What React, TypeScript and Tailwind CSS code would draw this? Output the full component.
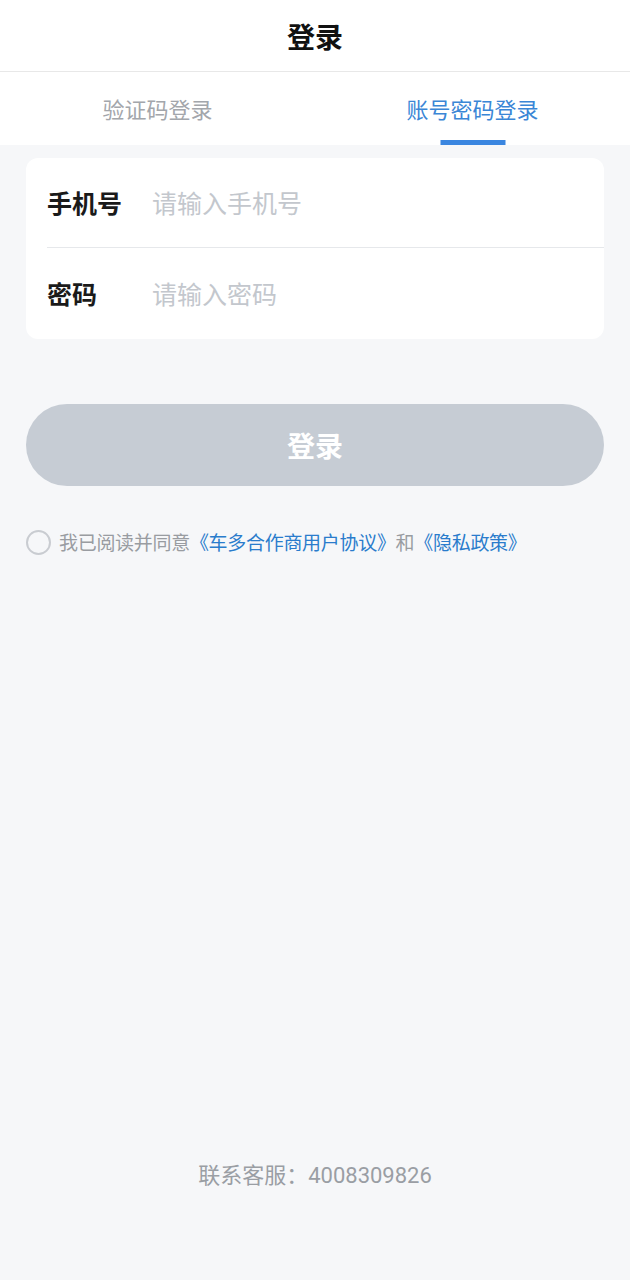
export default function App() {
  return (
    <div
      className="flex min-h-[1280px] w-[630px] flex-col bg-[#f6f7f9]"
      style={{ fontFamily: '"Noto Sans CJK SC", "Noto Sans", sans-serif' }}
    >
      {/* Title bar */}
      <div className="flex h-[72px] items-center justify-center border-b border-[#e8e8e8] bg-white">
        <span className="text-[28px] font-bold text-[#111]">登录</span>
      </div>

      {/* Tabs */}
      <div className="flex h-[73px] bg-white">
        <div className="flex flex-1 items-center justify-center">
          <span className="text-[22px] text-[#a3a6ab]">验证码登录</span>
        </div>
        <div className="relative flex flex-1 items-center justify-center">
          <span className="text-[22px] text-[#3a86d6]">账号密码登录</span>
          <div className="absolute bottom-0 left-1/2 h-[5px] w-[65px] -translate-x-1/2 bg-[#3a86e0]" />
        </div>
      </div>

      <div className="flex flex-1 flex-col px-[26px] pt-[13px]">
        {/* Form card */}
        <div className="rounded-[12px] bg-white pl-[21px]">
          <div className="flex h-[90px] items-center border-b border-[#e6e8eb]">
            <span className="w-[105px] text-[25px] font-bold text-[#1a1a1a]">手机号</span>
            <span className="text-[25px] text-[#c3c7cd]">请输入手机号</span>
          </div>
          <div className="flex h-[91px] items-center">
            <span className="w-[105px] text-[25px] font-bold text-[#1a1a1a]">密码</span>
            <span className="text-[25px] text-[#c3c7cd]">请输入密码</span>
          </div>
        </div>

        {/* Login button */}
        <div className="mt-[65px] flex h-[82px] items-center justify-center rounded-full bg-[#c6ccd4]">
          <span className="text-[28px] font-bold text-white">登录</span>
        </div>

        {/* Agreement */}
        <div className="mt-[42px] flex items-center">
          <div className="h-[25px] w-[25px] rounded-full border-2 border-[#c9ccd1]" />
          <span className="ml-[8px] text-[19px] tracking-[-0.3px] text-[#999ca1]">
            我已阅读并同意
            <span className="text-[#2a7ccc]">《车多合作商用户协议》</span>
            和
            <span className="text-[#2a7ccc]">《隐私政策》</span>
          </span>
        </div>

        <div className="flex-1" />

        {/* Footer */}
        <div className="mb-[88px] text-center text-[22px] text-[#9a9ea4]">
          联系客服：<span className="font-[Roboto,sans-serif]">4008309826</span>
        </div>
      </div>
    </div>
  );
}
